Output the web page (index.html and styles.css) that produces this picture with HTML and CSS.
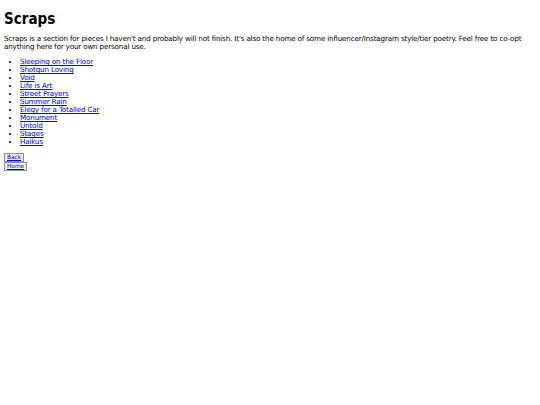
FILE: index.html
```html
<!DOCTYPE html>
<html lang="en">

<head>
    <meta charset="UTF-8">
    <meta name="viewport" content="width=device-width, initial-scale=1.0">
    <title>Scraps</title>
    <link rel="stylesheet" href="styles.css">
</head>

<body>
    <h1>Scraps</h1>
    <p>Scraps is a section for pieces I haven't and probably will not finish. It's also the home of some influencer/Instagram style/tier poetry. Feel free to co-opt anything here for your own personal use.</p>
    <ul class="scraps">
        <li><a href="#">Sleeping on the Floor</a></li>
        <li><a href="#">Shotgun Loving</a></li>
        <li><a href="#">Void</a></li>
        <li><a href="#">Life is Art</a></li>
        <li><a href="#">Street Prayers</a></li>
        <li><a href="#">Summer Rain</a></li>
        <li><a href="#">Elegy for a Totalled Car</a></li>
        <li><a href="#">Monument</a></li>
        <li><a href="#">Untold</a></li>
        <li><a href="#">Stages</a></li>
        <li><a href="#">Haikus</a></li>
    </ul>
    <div class="nav">
        <button><a href="#">Back</a></button>
    </div>
    <div class="nav">
        <button><a href="#">Home</a></button>
    </div>
</body>

</html>
```

FILE: styles.css
```css
body {
    margin: 4px;
    font-family: "DejaVu Sans", Verdana, sans-serif;
    font-size: 7.2px;
    letter-spacing: -0.17px;
    line-height: 8px;
    color: #000;
    background: #fff;
}

h1 {
    font-family: "DejaVu Sans Condensed", "DejaVu Sans", sans-serif;
    font-size: 15px;
    line-height: 18px;
    letter-spacing: 0;
    margin: 6px 0 7px;
}

p {
    margin: 0 0 7px;
}

.scraps {
    margin: 0 0 7px;
    padding-left: 16px;
}

a {
    color: #0000ee;
}

.nav button {
    font-family: "DejaVu Sans", Verdana, sans-serif;
    font-size: 5.8px;
    line-height: 7px;
    letter-spacing: 0;
    margin: 0;
    padding: 0 2px;
    border: 1px solid #8f8f8f;
    border-radius: 0;
    background: #efefef;
}
```
